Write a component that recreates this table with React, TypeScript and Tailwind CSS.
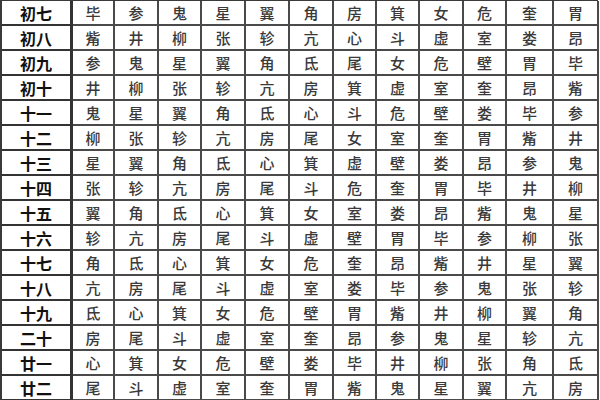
const ROWS: [string, string[]][] = [
  ["初七", ["毕", "参", "鬼", "星", "翼", "角", "房", "箕", "女", "危", "奎", "胃"]],
  ["初八", ["觜", "井", "柳", "张", "轸", "亢", "心", "斗", "虚", "室", "娄", "昂"]],
  ["初九", ["参", "鬼", "星", "翼", "角", "氐", "尾", "女", "危", "壁", "胃", "毕"]],
  ["初十", ["井", "柳", "张", "轸", "亢", "房", "箕", "虚", "室", "奎", "昂", "觜"]],
  ["十一", ["鬼", "星", "翼", "角", "氐", "心", "斗", "危", "壁", "娄", "毕", "参"]],
  ["十二", ["柳", "张", "轸", "亢", "房", "尾", "女", "室", "奎", "胃", "觜", "井"]],
  ["十三", ["星", "翼", "角", "氐", "心", "箕", "虚", "壁", "娄", "昂", "参", "鬼"]],
  ["十四", ["张", "轸", "亢", "房", "尾", "斗", "危", "奎", "胃", "毕", "井", "柳"]],
  ["十五", ["翼", "角", "氐", "心", "箕", "女", "室", "娄", "昂", "觜", "鬼", "星"]],
  ["十六", ["轸", "亢", "房", "尾", "斗", "虚", "壁", "胃", "毕", "参", "柳", "张"]],
  ["十七", ["角", "氐", "心", "箕", "女", "危", "奎", "昂", "觜", "井", "星", "翼"]],
  ["十八", ["亢", "房", "尾", "斗", "虚", "室", "娄", "毕", "参", "鬼", "张", "轸"]],
  ["十九", ["氐", "心", "箕", "女", "危", "壁", "胃", "觜", "井", "柳", "翼", "角"]],
  ["二十", ["房", "尾", "斗", "虚", "室", "奎", "昂", "参", "鬼", "星", "轸", "亢"]],
  ["廿一", ["心", "箕", "女", "危", "壁", "娄", "毕", "井", "柳", "张", "角", "氐"]],
  ["廿二", ["尾", "斗", "虚", "室", "奎", "胃", "觜", "鬼", "星", "翼", "亢", "房"]],
];

export default function App() {
  return (
    <div className="w-[600px] h-[400px] overflow-hidden bg-white font-['Noto_Sans_CJK_SC',sans-serif]">
      <div className="grid w-[598px] grid-cols-[71px_42px_44px_43px_44px_44px_44px_43px_43px_44px_43px_47px_45px] grid-rows-[repeat(16,25px)] border-l-2 border-t border-[#3a3a3a]">
        {ROWS.map(([day, stars]) => (
          <div key={day} className="contents">
            <div className="flex items-center justify-center border-r-[3px] border-b-2 border-[#333] text-[16px] font-bold leading-none text-[#111]">
              {day}
            </div>
            {stars.map((s, i) => (
              <div
                key={i}
                className="flex items-center justify-center border-r-2 border-b-2 border-[#4a4a4a] text-[15px] font-medium leading-none text-[#3a3a3a]"
              >
                {s}
              </div>
            ))}
          </div>
        ))}
      </div>
    </div>
  );
}
